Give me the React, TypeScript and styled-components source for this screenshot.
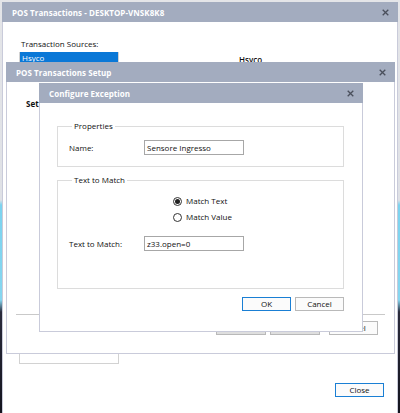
import styled, { createGlobalStyle } from 'styled-components'

const GlobalStyle = createGlobalStyle`
  html, body {
    margin: 0;
    padding: 0;
    background: #ffffff;
  }
  body {
    font-family: 'Open Sans', 'Noto Sans', 'Liberation Sans', sans-serif;
    font-size: 8px;
    color: #111;
  }
`

const Desktop = styled.div`
  position: relative;
  width: 400px;
  height: 413px;
  overflow: hidden;
  background: linear-gradient(
    to bottom,
    #e4e5e8 0px,
    #dfe1e6 200px,
    #7cd3ef 205px,
    #86d6f0 300px,
    #2a2b3c 312px,
    #14141e 413px
  );
`

const Window = styled.div<{ $x: number; $y: number; $w: number; $h: number }>`
  position: absolute;
  left: ${(p) => p.$x}px;
  top: ${(p) => p.$y}px;
  width: ${(p) => p.$w}px;
  height: ${(p) => p.$h}px;
  box-sizing: border-box;
  display: flex;
  flex-direction: column;
  background: #ffffff;
  border: 1px solid #c9cbda;
  border-top: none;
`

const TitleBar = styled.div`
  height: 20px;
  flex: none;
  margin: 0 -1px;
  display: flex;
  align-items: center;
  justify-content: space-between;
  padding: 0 9px 0 10px;
  background: #a3acbf;
  color: #ffffff;
  font-weight: 700;
  font-size: 8px;
  letter-spacing: 0.05px;
`

const CloseGlyph = () => (
  <svg width="7" height="7" viewBox="0 0 7 7">
    <path d="M0.7 0.7 L6.3 6.3 M6.3 0.7 L0.7 6.3" stroke="#4a4f5c" strokeWidth="1.3" />
  </svg>
)

const Body = styled.div<{ $pad: string }>`
  flex: 1;
  display: flex;
  flex-direction: column;
  padding: ${(p) => p.$pad};
  min-height: 0;
`

/* outer window */
const TopRow = styled.div`
  display: flex;
`

const SourceColumn = styled.div`
  display: flex;
  flex-direction: column;
  width: 100px;
`

const Label = styled.div`
  line-height: 10px;
  white-space: nowrap;
  padding-left: 2px;
`

const ListBox = styled.div`
  margin-top: 3px;
  height: 312px;
  box-sizing: border-box;
  border: 1px solid #d2d2d2;
  border-top: none;
`

const ListItem = styled.div<{ $selected?: boolean }>`
  height: 11px;
  line-height: 11px;
  padding-left: 2px;
  background: ${(p) => (p.$selected ? '#0a78d7' : 'transparent')};
  color: ${(p) => (p.$selected ? '#ffffff' : '#111')};
`

const Heading = styled.div`
  margin: 16px 0 0 120px;
  line-height: 10px;
  font-weight: 600;
`

const Footer = styled.div`
  display: flex;
  justify-content: flex-end;
  margin-top: 19px;
`

const Button = styled.div<{ $default?: boolean; $gray?: boolean; $w?: number }>`
  width: ${(p) => p.$w ?? 49}px;
  height: 14px;
  box-sizing: border-box;
  display: flex;
  align-items: center;
  justify-content: center;
  border: 1px solid ${(p) => (p.$default ? '#1a7fd4' : '#b9b9b9')};
  background: ${(p) => (p.$gray ? '#dedede' : '#fbfbfb')};
  font-size: 8px;
  line-height: 10px;
`

/* setup window */
const Bold = styled.div`
  font-weight: 700;
  line-height: 10px;
  padding-left: 10px;
`

const Separator = styled.div`
  margin-top: auto;
  height: 1px;
  background: #c9c9c9;
`

const SetupButtons = styled.div`
  display: flex;
  justify-content: flex-end;
  gap: 4px;
  margin-top: 6px;
  padding-right: 7px;
  & > :last-child {
    margin-left: 5px;
  }
`

/* configure exception */
const Group = styled.fieldset<{ $top: number; $pad: string }>`
  margin: ${(p) => p.$top}px 0 0 0;
  padding: ${(p) => p.$pad};
  border: 1px solid #dcdcdc;
  min-width: 0;
`

const Legend = styled.legend`
  margin-left: 3px;
  padding: 0 2px;
  line-height: 10px;
  font-size: 8px;
`

const FieldRow = styled.div<{ $top?: number }>`
  display: flex;
  align-items: center;
  margin-top: ${(p) => p.$top ?? 0}px;
`

const FieldLabel = styled.div`
  width: 75px;
  line-height: 10px;
`

const TextBox = styled.div`
  width: 100px;
  height: 15px;
  box-sizing: border-box;
  border: 1px solid #a7a7a7;
  padding-left: 2px;
  display: flex;
  align-items: center;
  line-height: 10px;
`

const RadioRow = styled.label<{ $top: number }>`
  display: flex;
  align-items: center;
  gap: 4px;
  margin: ${(p) => p.$top}px 0 0 104px;
  height: 12px;
  line-height: 10px;
`

const RadioCircle = styled.span<{ $checked?: boolean }>`
  width: 9px;
  height: 9px;
  box-sizing: border-box;
  border: 1px solid #333;
  border-radius: 50%;
  display: flex;
  align-items: center;
  justify-content: center;
  &::after {
    content: '';
    width: 5px;
    height: 5px;
    border-radius: 50%;
    background: ${(p) => (p.$checked ? '#222' : 'transparent')};
  }
`

const DialogButtons = styled.div`
  display: flex;
  justify-content: flex-end;
  gap: 4px;
  margin-top: 8px;
`

export default function App() {
  return (
    <Desktop>
      <GlobalStyle />

      <Window $x={2} $y={2} $w={396} $h={420}>
        <TitleBar>
          <span>POS Transactions - DESKTOP-VNSK8K8</span>
          <CloseGlyph />
        </TitleBar>
        <Body $pad="17px 13px 0 16px">
          <TopRow>
            <SourceColumn>
              <Label>Transaction Sources:</Label>
              <ListBox>
                <ListItem $selected>Hsyco</ListItem>
              </ListBox>
            </SourceColumn>
            <Heading>Hsyco</Heading>
          </TopRow>
          <Footer>
            <Button $default $w={49}>Close</Button>
          </Footer>
        </Body>
      </Window>

      <Window $x={6} $y={62} $w={389} $h={292}>
        <TitleBar>
          <span>POS Transactions Setup</span>
          <CloseGlyph />
        </TitleBar>
        <Body $pad="17px 9px 18px 9px">
          <Bold>Set</Bold>
          <Separator />
          <SetupButtons>
            <Button $gray $w={50}>Add</Button>
            <Button $gray $w={50}>Edit</Button>
            <Button $w={49}>Cancel</Button>
          </SetupButtons>
        </Body>
      </Window>

      <Window $x={39} $y={83} $w={324} $h={249}>
        <TitleBar>
          <span>Configure Exception</span>
          <CloseGlyph />
        </TitleBar>
        <Body $pad="0 18px 17px 17px">
          <Group $top={18} $pad="0 11px 11px 11px">
            <Legend>Properties</Legend>
            <FieldRow $top={9}>
              <FieldLabel>Name:</FieldLabel>
              <TextBox>Sensore Ingresso</TextBox>
            </FieldRow>
          </Group>
          <Group $top={8} $pad="0 11px 37px 11px">
            <Legend>Text to Match</Legend>
            <RadioRow $top={10}>
              <RadioCircle $checked />
              Match Text
            </RadioRow>
            <RadioRow $top={4}>
              <RadioCircle />
              Match Value
            </RadioRow>
            <FieldRow $top={13}>
              <FieldLabel>Text to Match:</FieldLabel>
              <TextBox>z33.open=0</TextBox>
            </FieldRow>
          </Group>
          <DialogButtons>
            <Button $default $w={49}>OK</Button>
            <Button $w={49}>Cancel</Button>
          </DialogButtons>
        </Body>
      </Window>
    </Desktop>
  )
}
